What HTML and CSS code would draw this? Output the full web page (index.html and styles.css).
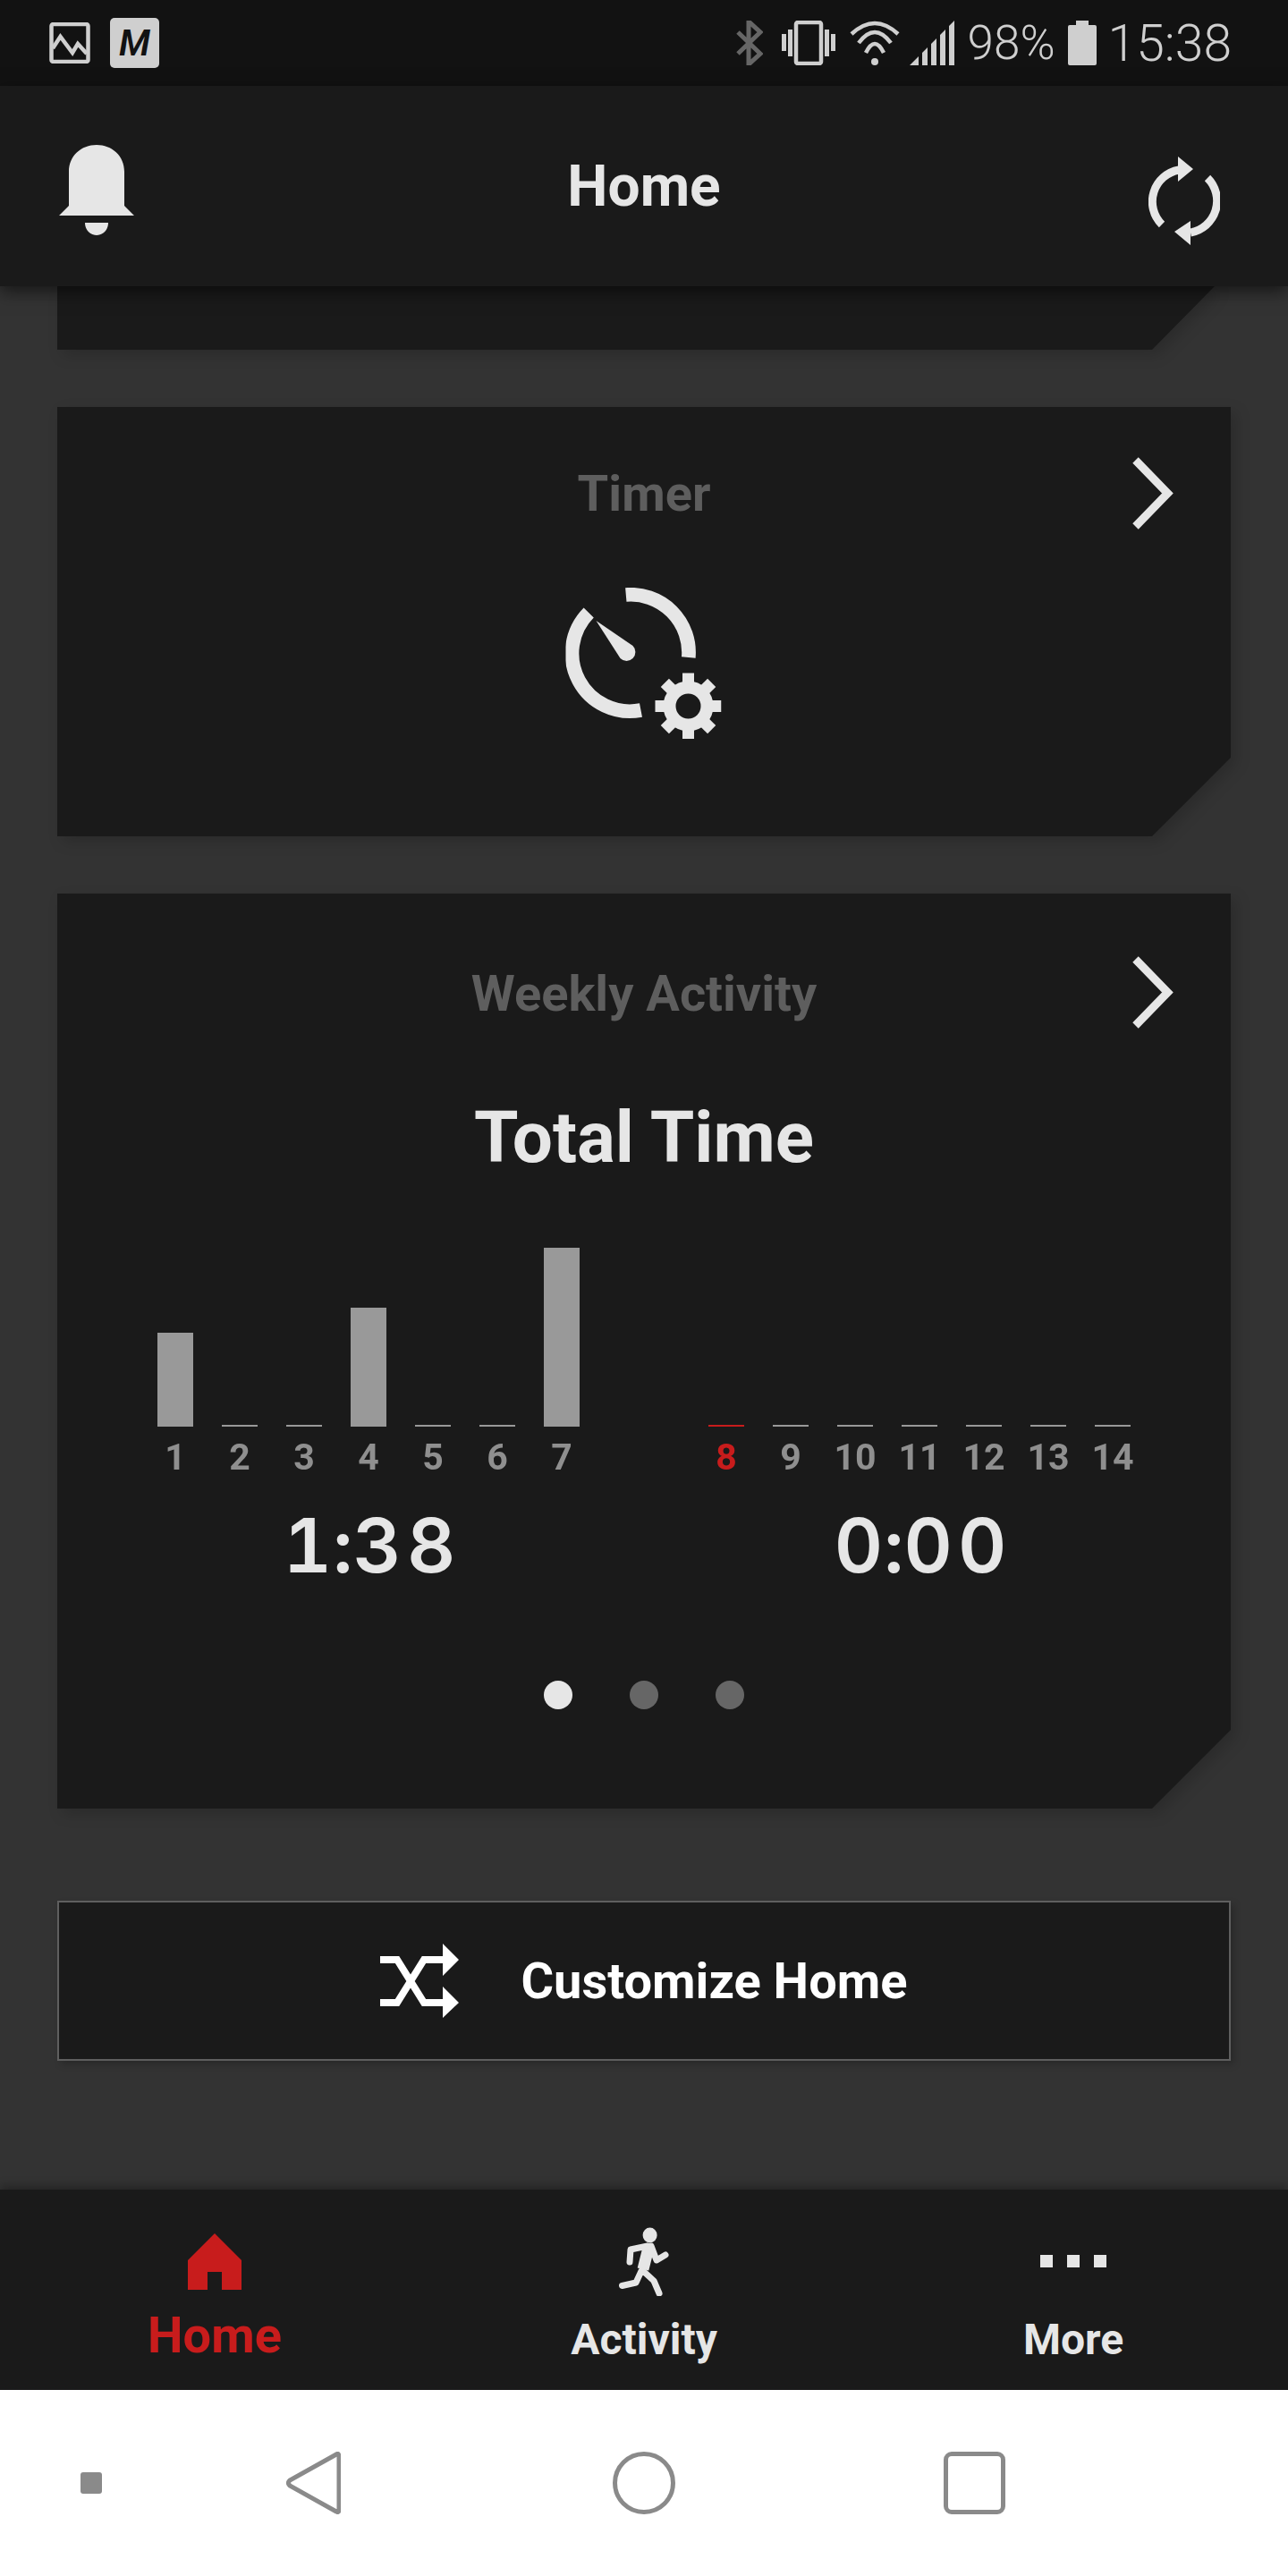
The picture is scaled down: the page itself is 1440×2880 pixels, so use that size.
FILE: index.html
```html
<!DOCTYPE html>
<html lang="en">
<head>
    <meta charset="UTF-8">
    <meta name="viewport" content="width=device-width, initial-scale=1.0">
    <title>Home</title>
    <link rel="stylesheet" href="styles.css">
</head>
<body>
    <div class="status-bar">
        <svg class="st-image" viewBox="55 25 46 46"><rect x="57.5" y="27" width="41" height="42" rx="2"/><path d="M59 54L67.5 41 81 59 87 49 97 60"/></svg>
        <span class="st-badge">M</span>
        <svg class="st-bt" viewBox="826 23 30 50"><path d="M828 36L853 60 840 72V24L853 36 828 60"/></svg>
        <svg class="st-vibrate" viewBox="877 23 60 50"><rect x="893" y="25" width="28" height="46" rx="2"/><path class="fill" d="M877 38h5v19h-5zM884 33h5v30h-5zM925 33h5v30h-5zM932 38h5v19h-5z"/></svg>
        <svg class="st-wifi" viewBox="952 23 58 50"><path d="M955 38Q981 14 1007 38M963 48Q981 24 999 48M971 59Q981 39 991 59"/><circle class="fill" cx="981" cy="69" r="4"/></svg>
        <svg class="st-signal" viewBox="1020 23 50 50"><path class="fill" d="M1020 73L1030 63V73ZM1034 59L1040 53V73H1034ZM1044 49L1050 43V73H1044ZM1054 39L1060 33V73H1054ZM1064 29L1070 23V73H1064Z"/></svg>
        <span class="st-level">98%</span>
        <svg class="st-battery" viewBox="1196 23 32 50"><path class="fill" d="M1205 23H1219V28H1226Q1228 28 1228 30V71Q1228 73 1226 73H1198Q1196 73 1196 71V30Q1196 28 1198 28H1205Z"/></svg>
        <span class="st-clock">15:38</span>
    </div>

    <header class="app-bar">
        <svg class="bell" viewBox="66 162 84 101"><path d="M77 230L66 241H150L139 230V192C139 174 125 162 108 162S77 174 77 192ZM95 249H121C121 257 115 263 108 263S95 257 95 249Z"/></svg>
        <h1>Home</h1>
        <svg class="sync" viewBox="1284 174 80 99"><path class="arc" d="M1299 250A36 36 0 0 1 1318 189M1350 198A36 36 0 0 1 1331 259"/><path d="M1317 174L1334 188 1317 202ZM1331 246L1313 258 1331 273Z"/></svg>
    </header>

    <main class="content">
        <div class="card-wrap">
            <div class="card card-stub"></div>
        </div>

        <div class="card-wrap">
            <section class="card card-timer">
                <div class="card-head">
                    <h2>Timer</h2>
                    <svg class="chevron" viewBox="1266 511 46 81"><path d="M1269.5 514.5L1305.5 551.5 1269.5 588.5"/></svg>
                </div>
                <svg class="timer-icon" viewBox="632 657 174 169">
                    <path class="ring" d="M716 794A64.7 64.7 0 0 1 657.7 685M699.3 665A64.7 64.7 0 0 1 769.3 735"/>
                    <path d="M666 694L707 722A9.7 9.7 0 1 1 693 736Z"/>
                    <circle class="gear-body" cx="769" cy="789.5" r="21"/>
                    <g class="gear-teeth">
                        <path d="M769 765V752.5"/>
                        <path d="M769 765V752.5" transform="rotate(45 769 789.5)"/>
                        <path d="M769 765V752.5" transform="rotate(90 769 789.5)"/>
                        <path d="M769 765V752.5" transform="rotate(135 769 789.5)"/>
                        <path d="M769 765V752.5" transform="rotate(180 769 789.5)"/>
                        <path d="M769 765V752.5" transform="rotate(225 769 789.5)"/>
                        <path d="M769 765V752.5" transform="rotate(270 769 789.5)"/>
                        <path d="M769 765V752.5" transform="rotate(315 769 789.5)"/>
                    </g>
                </svg>
            </section>
        </div>

        <div class="card-wrap">
            <section class="card card-weekly">
                <div class="card-head">
                    <h2>Weekly Activity</h2>
                    <svg class="chevron" viewBox="1266 511 46 81"><path d="M1269.5 514.5L1305.5 551.5 1269.5 588.5"/></svg>
                </div>
                <div class="chart-title">Total Time</div>
                <div class="weeks">
                    <div class="week">
                        <div class="days">
                            <div class="day"><div class="bar" style="height:105px"></div><span>1</span></div>
                            <div class="day"><div class="bar" style="height:2px"></div><span>2</span></div>
                            <div class="day"><div class="bar" style="height:2px"></div><span>3</span></div>
                            <div class="day"><div class="bar" style="height:133px"></div><span>4</span></div>
                            <div class="day"><div class="bar" style="height:2px"></div><span>5</span></div>
                            <div class="day"><div class="bar" style="height:2px"></div><span>6</span></div>
                            <div class="day"><div class="bar" style="height:200px"></div><span>7</span></div>
                        </div>
                        <div class="week-time">1<span class="colon">:</span>38</div>
                    </div>
                    <div class="week">
                        <div class="days">
                            <div class="day today"><div class="bar" style="height:2px"></div><span>8</span></div>
                            <div class="day"><div class="bar" style="height:2px"></div><span>9</span></div>
                            <div class="day"><div class="bar" style="height:2px"></div><span>10</span></div>
                            <div class="day"><div class="bar" style="height:2px"></div><span>11</span></div>
                            <div class="day"><div class="bar" style="height:2px"></div><span>12</span></div>
                            <div class="day"><div class="bar" style="height:2px"></div><span>13</span></div>
                            <div class="day"><div class="bar" style="height:2px"></div><span>14</span></div>
                        </div>
                        <div class="week-time">0<span class="colon">:</span>00</div>
                    </div>
                </div>
                <div class="pager">
                    <i class="active"></i>
                    <i></i>
                    <i></i>
                </div>
            </section>
        </div>

        <button class="customize">
            <svg class="shuffle" viewBox="426 173 88 83">
                <path class="lines" d="M426 191H445L475 239H497M426 239H445L475 191H497"/>
                <path d="M496 173L514 191 496 209ZM496 221L514 239 496 256Z"/>
            </svg>
            <span>Customize Home</span>
        </button>
    </main>

    <nav class="tabs">
        <div class="tab tab-active">
            <div class="tab-icon">
                <svg class="house" viewBox="210 2494 60 63"><path d="M240 2494L270 2524V2557H248V2537H232V2557H210V2524Z"/></svg>
            </div>
            <span>Home</span>
        </div>
        <div class="tab">
            <div class="tab-icon">
                <svg class="runner" viewBox="690 2488 56 78">
                    <ellipse cx="724.6" cy="2498" rx="8" ry="8.5"/>
                    <path class="torso" d="M723 2512L717 2536"/>
                    <path class="limb" d="M722 2510L703 2514 702 2528M726 2510L732 2526 742 2520M715 2538L709 2551 693.5 2554.5M717 2538L729 2549 735 2563"/>
                </svg>
            </div>
            <span>Activity</span>
        </div>
        <div class="tab">
            <div class="tab-icon">
                <div class="more-dots"><i></i><i></i><i></i></div>
            </div>
            <span>More</span>
        </div>
    </nav>

    <div class="nav-bar">
        <div class="nav-dot"></div>
        <svg class="nav-back" viewBox="320 2741 61 70"><path d="M376 2744Q379 2742 379 2747V2805Q379 2810 376 2808L324 2779Q321 2776 324 2773Z"/></svg>
        <div class="nav-home"></div>
        <div class="nav-recent"></div>
    </div>
</body>
</html>
```

FILE: styles.css
```css
* {
    box-sizing: border-box;
}

html, body {
    margin: 0;
    padding: 0;
}

body {
    width: 1440px;
    height: 2880px;
    overflow: hidden;
    display: flex;
    flex-direction: column;
    background-color: #333333;
    color: #e6e6e6;
    font-family: Roboto, "Liberation Sans", sans-serif;
}

svg {
    display: block;
    flex: none;
}

/* status bar */
.status-bar {
    height: 96px;
    flex: none;
    display: flex;
    align-items: center;
    padding: 0 63px 0 55px;
    background-color: #121212;
    color: #cfcfcf;
}

.status-bar svg path,
.status-bar svg rect {
    fill: none;
    stroke: #cfcfcf;
    stroke-width: 4.5;
}

.status-bar svg .fill {
    fill: #cfcfcf;
    stroke: none;
}

.st-image { width: 46px; height: 46px; }

.st-badge {
    width: 55px;
    height: 56px;
    margin-left: 22px;
    border-radius: 5px;
    background-color: #cfcfcf;
    color: #121212;
    font-size: 41px;
    font-weight: 600;
    font-style: italic;
    line-height: 56px;
    text-align: center;
}

.st-bt { width: 30px; height: 50px; margin-left: auto; }
.status-bar .st-bt path { stroke: #666666; stroke-width: 5; }
.st-vibrate { width: 60px; height: 50px; margin-left: 21px; }
.st-wifi { width: 58px; height: 50px; margin-left: 15px; }
.st-signal { width: 50px; height: 50px; margin-left: 10px; }

.st-level {
    margin-left: 15px;
    font-size: 53px;
    font-weight: 300;
}

.st-battery { width: 32px; height: 50px; margin-left: 14px; }

.st-clock {
    margin-left: 13px;
    font-size: 57px;
    font-weight: 300;
}

/* app bar */
.app-bar {
    position: relative;
    z-index: 2;
    height: 224px;
    flex: none;
    display: grid;
    grid-template-columns: 1fr auto 1fr;
    align-items: center;
    padding: 0 66px;
    background-color: #1a1a1a;
    box-shadow: 0 6px 18px rgba(0, 0, 0, 0.55);
}

.app-bar h1 {
    margin: 0;
    font-size: 64px;
    font-weight: 700;
}

.bell {
    width: 84px;
    height: 101px;
    margin-top: 9px;
    fill: #e6e6e6;
}

.sync {
    width: 80px;
    height: 99px;
    justify-self: end;
    margin-top: 32px;
    margin-right: 10px;
    fill: #e6e6e6;
}

.sync .arc {
    fill: none;
    stroke: #e6e6e6;
    stroke-width: 9;
}

/* scroll area */
.content {
    height: 2128px;
    flex: none;
    display: flex;
    flex-direction: column;
    padding: 0 64px;
}

/* the filter sits on a wrapper so the shadow follows the cut corner */
.card-wrap {
    margin-bottom: 64px;
    filter: drop-shadow(6px 6px 8px rgba(0, 0, 0, 0.16));
}

.card {
    background-color: #1a1a1a;
    clip-path: polygon(0 0, 100% 0, 100% calc(100% - 88px), calc(100% - 88px) 100%, 0 100%);
}

.card-stub {
    height: 71px;
    clip-path: polygon(0 0, calc(100% - 18px) 0, calc(100% - 88px) 100%, 0 100%);
}

.card-timer {
    height: 480px;
    padding-top: 56px;
}

.card-weekly {
    height: 1023px;
    padding-top: 70px;
}

.card-head {
    display: grid;
    grid-template-columns: 1fr auto 1fr;
    align-items: center;
    height: 81px;
    padding-right: 64px;
    padding-left: 64px;
}

.card-head h2 {
    grid-column: 2;
    margin: 0;
    color: #5e5e5e;
    font-size: 56px;
    font-weight: 700;
}

.card-weekly h2 {
    margin-top: 2px;
}

.chevron {
    grid-column: 3;
    justify-self: end;
    width: 46px;
    height: 81px;
    fill: none;
    stroke: #e6e6e6;
    stroke-width: 9;
}

.timer-icon {
    width: 174px;
    height: 169px;
    margin: 65px auto 0;
    transform: translateX(-0.5px);
    fill: #e6e6e6;
}

.timer-icon .ring {
    fill: none;
    stroke: #e6e6e6;
    stroke-width: 15.7;
}

.gear-body {
    fill: none;
    stroke: #e6e6e6;
    stroke-width: 14;
}

.gear-teeth path {
    fill: none;
    stroke: #e6e6e6;
    stroke-width: 13;
}

.chart-title {
    margin-top: 77px;
    font-size: 80px;
    font-weight: 700;
    line-height: 90px;
    text-align: center;
}

.weeks {
    display: flex;
    gap: 144px;
    margin-top: 78px;
    padding: 0 112px;
}

.week {
    width: 472px;
}

.days {
    display: grid;
    grid-template-columns: repeat(7, 40px);
    column-gap: 32px;
}

.day {
    display: flex;
    flex-direction: column;
    align-items: center;
    justify-content: flex-end;
    height: 259px;
    color: #8f8f8f;
    font-size: 41px;
    font-weight: 700;
    line-height: 50px;
}

.day span {
    margin-top: 9px;
}

.bar {
    width: 40px;
    background-color: #999999;
}

.today {
    color: #c81c1c;
}

.today .bar {
    background-color: #c81c1c;
}

.week-time {
    margin-top: 34px;
    padding-left: 8px;
    font-family: Inter, Roboto, sans-serif;
    font-size: 84px;
    font-weight: 600;
    font-variant-numeric: tabular-nums;
    letter-spacing: 6px;
    line-height: 80px;
    text-align: center;
}

.colon {
    margin-left: -5px;
    letter-spacing: 0;
}

.pager {
    display: flex;
    justify-content: center;
    gap: 64px;
    margin-top: 111px;
}

.pager i {
    width: 32px;
    height: 32px;
    border-radius: 50%;
    background-color: #666666;
}

.pager .active {
    background-color: #e6e6e6;
}

.card-wrap:nth-child(3) {
    margin-bottom: 103px;
}

.customize {
    height: 179px;
    flex: none;
    display: flex;
    align-items: center;
    justify-content: center;
    gap: 69px;
    padding: 0;
    border: 2px solid #5f5f5f;
    background-color: #1a1a1a;
    box-shadow: 4px 4px 8px rgba(0, 0, 0, 0.2);
    color: #ffffff;
    font-family: inherit;
    font-size: 56px;
    font-weight: 700;
}

.shuffle {
    width: 88px;
    height: 83px;
    fill: #ffffff;
}

.shuffle .lines {
    fill: none;
    stroke: #ffffff;
    stroke-width: 8;
}

/* bottom tabs */
.tabs {
    height: 224px;
    flex: none;
    display: grid;
    grid-template-columns: repeat(3, 1fr);
    background-color: #1a1a1a;
    box-shadow: 0 -4px 10px rgba(0, 0, 0, 0.3);
}

.tab {
    display: flex;
    flex-direction: column;
    align-items: center;
    padding-top: 42px;
    font-size: 48px;
    font-weight: 700;
    line-height: 56px;
}

.tab span {
    margin-top: 22px;
}

.tab-icon {
    height: 76px;
    display: flex;
    align-items: center;
}

.tab-active {
    color: #c81c1c;
    font-size: 56px;
}

.tab-active span {
    margin-top: 17px;
}

.house {
    width: 60px;
    height: 63px;
    fill: #c81c1c;
}

.runner {
    width: 56px;
    height: 78px;
    fill: #e6e6e6;
}

.runner .torso {
    fill: none;
    stroke: #e6e6e6;
    stroke-width: 13;
}

.runner .limb {
    fill: none;
    stroke: #e6e6e6;
    stroke-width: 7;
    stroke-linecap: round;
    stroke-linejoin: round;
}

.more-dots {
    display: flex;
    gap: 16px;
}

.more-dots i {
    width: 14px;
    height: 14px;
    background-color: #e6e6e6;
}

/* android navigation bar */
.nav-bar {
    height: 208px;
    flex: 1;
    display: flex;
    align-items: center;
    padding-left: 90px;
    background-color: #ffffff;
}

.nav-dot {
    width: 24px;
    height: 24px;
    border-radius: 3px;
    background-color: #8a8a8a;
}

.nav-back {
    width: 61px;
    height: 70px;
    margin-left: 206px;
    fill: none;
    stroke: #8a8a8a;
    stroke-width: 5;
}

.nav-home {
    width: 70px;
    height: 70px;
    margin-left: 304px;
    border: 5px solid #8a8a8a;
    border-radius: 50%;
}

.nav-recent {
    width: 69px;
    height: 70px;
    margin-left: 300px;
    border: 5px solid #8a8a8a;
    border-radius: 9px;
}
```
